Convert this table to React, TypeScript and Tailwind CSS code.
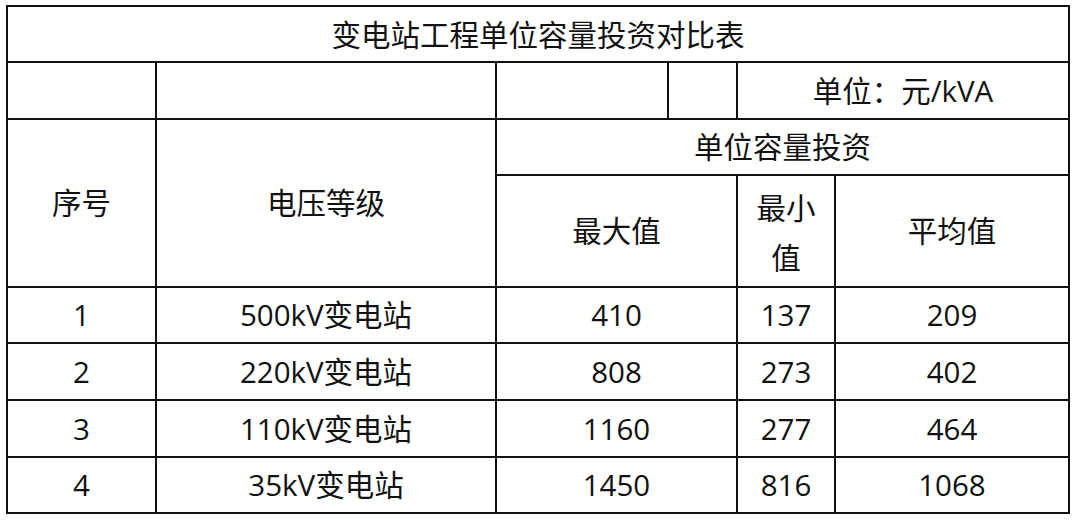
import React from "react";

const rows = [
  ["1", "500kV变电站", "410", "137", "209"],
  ["2", "220kV变电站", "808", "273", "402"],
  ["3", "110kV变电站", "1160", "277", "464"],
  ["4", "35kV变电站", "1450", "816", "1068"],
];

const cell = "bg-white flex items-center justify-center text-center";

export default function App() {
  return (
    <div
      className="w-[1080px] h-[520px] bg-white pl-[6px] pt-[5px] text-[#111] text-[29.5px]"
      style={{ fontFamily: '"Open Sans","Noto Sans CJK SC",sans-serif' }}
    >
      <div className="grid w-max bg-[#111] p-[2px] gap-[2px] grid-cols-[147px_338px_170px_67px_96px_232px] grid-rows-[54px_55px_54px_110px_54px_55px_55px_54px] leading-none">
        <div className={`${cell} col-span-6 pt-[2px]`}>变电站工程单位容量投资对比表</div>

        <div className={cell}></div>
        <div className={cell}></div>
        <div className={cell}></div>
        <div className={cell}></div>
        <div className={`${cell} col-span-2`}>单位：元/kVA</div>

        <div className={`${cell} row-span-2`}>序号</div>
        <div className={`${cell} row-span-2`}>电压等级</div>
        <div className={`${cell} col-span-4`}>单位容量投资</div>

        <div className={`${cell} col-span-2`}>最大值</div>
        <div className={`${cell} leading-[50px] pt-[4px]`}>
          最小
          <br />
          值
        </div>
        <div className={cell}>平均值</div>

        {rows.map((r) => (
          <React.Fragment key={r[0]}>
            <div className={cell}>{r[0]}</div>
            <div className={cell}>{r[1]}</div>
            <div className={`${cell} col-span-2`}>{r[2]}</div>
            <div className={cell}>{r[3]}</div>
            <div className={cell}>{r[4]}</div>
          </React.Fragment>
        ))}
      </div>
    </div>
  );
}
